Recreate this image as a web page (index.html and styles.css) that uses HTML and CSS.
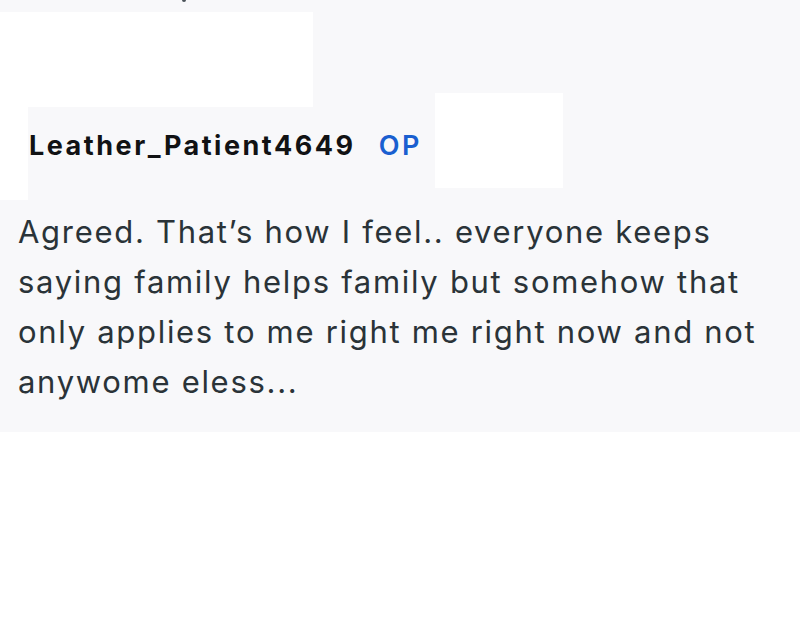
FILE: index.html
```html
<!DOCTYPE html>
<html>
<head>
<meta charset="utf-8">
<link rel="stylesheet" href="styles.css">
</head>
<body>
<div class="comment">
  <div class="cut-mark"></div>
  <div class="header">
    <span class="author">Leather_Patient4649</span>
    <span class="op">OP</span>
  </div>
  <p class="body">Agreed. That’s how I feel.. everyone keeps saying family helps family but somehow that only applies to me right me right now and not anywome eless...</p>
  <div class="redact redact-a"></div>
  <div class="redact redact-b"></div>
  <div class="redact redact-c"></div>
</div>
</body>
</html>
```

FILE: styles.css
```css
html, body {
  margin: 0;
  padding: 0;
  background: #ffffff;
}
.comment {
  position: relative;
  height: 432px;
  background: #f8f8fa;
  font-family: Inter, "Noto Sans", sans-serif;
  overflow: hidden;
}
.cut-mark {
  position: absolute;
  left: 182px;
  top: 0;
  width: 4px;
  height: 2px;
  border-radius: 0 0 2px 2px;
  background: #4a5258;
}
.header {
  display: flex;
  align-items: baseline;
  gap: 23px;
  padding: 129px 0 0 29px;
  line-height: 34px;
}
.author {
  font-size: 27px;
  font-weight: 700;
  letter-spacing: 2.5px;
  color: #111214;
}
.op {
  font-size: 27px;
  font-weight: 600;
  letter-spacing: 2.5px;
  color: #1a5fd0;
}
.body {
  margin: 44px 0 0 18px;
  width: 770px;
  font-size: 31px;
  line-height: 50px;
  letter-spacing: 1.7px;
  color: #2a3338;
}
.redact {
  position: absolute;
  background: #ffffff;
}
.redact-a {
  left: 0;
  top: 12px;
  width: 313px;
  height: 95px;
}
.redact-b {
  left: 0;
  top: 107px;
  width: 28px;
  height: 93px;
}
.redact-c {
  left: 435px;
  top: 93px;
  width: 128px;
  height: 95px;
}
```
